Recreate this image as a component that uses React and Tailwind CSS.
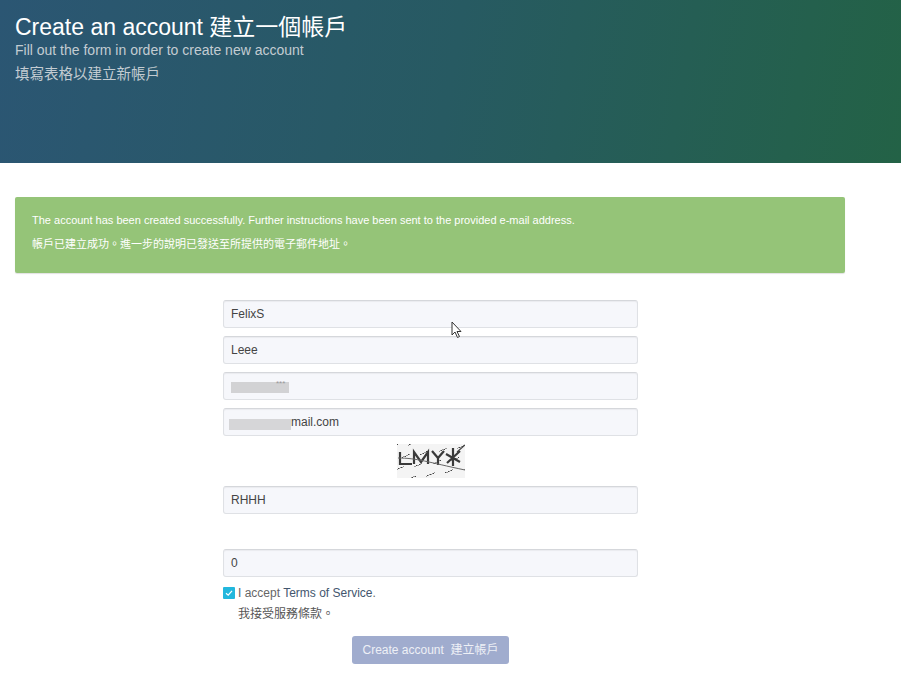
const sans = "font-['Liberation_Sans','Noto_Sans_CJK_TC',sans-serif]";

function Field({ value, children, className = "" }) {
  return (
    <div className={`relative h-[28px] w-[415px] rounded-[3px] border border-[#dfe1e5] border-t-[#d5d7db] bg-[#f6f7fb] shadow-[inset_0_1px_1px_rgba(0,0,0,0.05)] pl-[7px] text-[12px] leading-[26px] text-[#444] ${className}`}>
      {value}
      {children}
    </div>
  );
}

function Captcha() {
  const specks = [];
  for (let i = 0; i < 90; i++) {
    specks.push([(i * 37) % 68, (i * 23 + (i % 7) * 5) % 34]);
  }
  return (
    <svg width="68" height="34" viewBox="0 0 68 34" className="block">
      <rect width="68" height="34" fill="#f4f4f4" />
      {specks.map(([x, y], i) => (
        <rect key={i} x={x} y={y} width="1" height="1" fill={i % 3 ? "#9a9a9a" : "#444"} />
      ))}
      <g fill="none" stroke="#3a3a3a" strokeWidth="2.2" style={{ filter: "blur(0.4px)" }}>
        <path d="M3 8V20H15" />
        <path d="M17 20V8L24 18L31 8V20" />
        <path d="M35 7L41 14L47 7M41 14V21" />
        <path d="M56 4V22M49 10L63 18M63 7L50 19" />
      </g>
      <path d="M1 14C20 14 30 18 68 26" fill="none" stroke="#666" strokeWidth="1" />
      <path d="M60 8L68 1" fill="none" stroke="#444" strokeWidth="1.2" />
    </svg>
  );
}

export default function App() {
  return (
    <div className={`relative h-[683px] w-[901px] overflow-hidden bg-white ${sans}`}>
      <header className="h-[163px] bg-[linear-gradient(100deg,#2b5673_0%,#275a62_50%,#236246_100%)] px-[15px] pt-[14px]">
        <h1 className="text-[23px] leading-[27px] font-normal text-white">Create an account 建立一個帳戶</h1>
        <p className="text-[14px] leading-[19px] text-[#c3ccd2]">Fill out the form in order to create new account</p>
        <p className="mt-[2px] text-[14.5px] leading-[24px] text-[#c3ccd2]">填寫表格以建立新帳戶</p>
      </header>

      <main className="px-[15px] pt-[34px]">
        <div className="h-[76px] w-[830px] rounded-[2px] bg-[#95c478] px-[17px] pt-[13px] text-[11px] text-white shadow-[0_1px_1px_rgba(0,0,0,0.12)]">
          <p className="leading-[20px]">The account has been created successfully. Further instructions have been sent to the provided e-mail address.</p>
          <p className="mt-[4px] leading-[20px]">帳戶已建立成功。進一步的說明已發送至所提供的電子郵件地址。</p>
        </div>

        <form className="mt-[27px] ml-[208px] flex w-[415px] flex-col">
          <div className="flex flex-col gap-[8px]">
            <Field value="FelixS" />
            <Field value="Leee" />
            <Field>
              <span className="absolute left-[7px] top-[9px] h-[11px] w-[58px] bg-[#d2d2d4] blur-[0.5px]" />
              <span className="absolute left-[52px] top-[7px] text-[8px] leading-[8px] text-[#999]">***</span>
            </Field>
            <Field>
              <span className="absolute left-[5px] top-[10px] h-[11px] w-[62px] bg-[#d6d6d8] blur-[0.5px]" />
              <span className="absolute left-[67px] top-0">mail.com</span>
            </Field>
          </div>

          <div className="mt-[8px] flex h-[34px] justify-center">
            <Captcha />
          </div>

          <Field value="RHHH" className="mt-[8px]" />
          <Field value="0" className="mt-[35px]" />

          <div className="mt-[9px] flex items-start">
            <span className="mt-[1px] flex h-[12px] w-[12px] items-center justify-center rounded-[1px] bg-[#22b7dd]">
              <svg width="8" height="8" viewBox="0 0 8 8" fill="none" stroke="white" strokeWidth="1.2">
                <path d="M1 4.2L3.2 6.2L7 1.8" />
              </svg>
            </span>
            <div className="ml-[3px] text-[12px] text-[#666]">
              <p className="leading-[14px]">
                I accept <span className="text-[#43566e]">Terms of Service</span>.
              </p>
              <p className="mt-[7px] leading-[14px] text-[#555]">我接受服務條款。</p>
            </div>
          </div>

          <div className="mt-[15px] flex justify-center">
            <button type="button" className="h-[28px] w-[157px] rounded-[3px] bg-[#a0acce] text-[12px] text-[#eef0f6]">
              Create account&nbsp; 建立帳戶
            </button>
          </div>
        </form>
      </main>

      <svg className="absolute left-[451px] top-[321px]" width="12" height="18" viewBox="0 0 12 18">
        <path d="M1 1V14L4 11L6.5 16.5L8.5 15.5L6 10.5H10Z" fill="white" stroke="#333" strokeWidth="1" strokeLinejoin="round" />
      </svg>
    </div>
  );
}
